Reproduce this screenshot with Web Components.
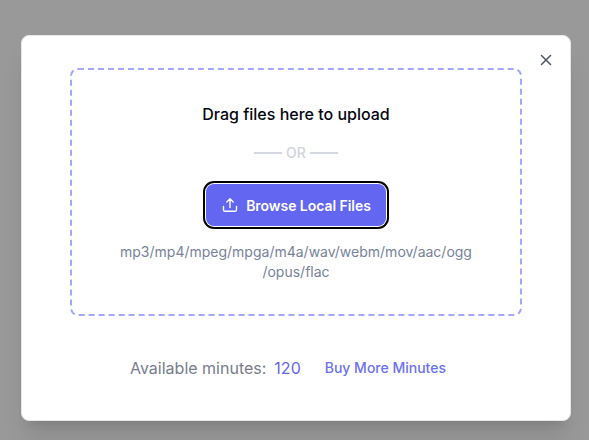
<!DOCTYPE html>
<html>
<head>
<meta charset="utf-8">
<style>
html, body { margin: 0; height: 100%; }
body { font-family: Inter, "Liberation Sans", sans-serif; overflow: hidden; }
</style>
</head>
<body>
<upload-dialog>
    <drop-zone>
        <browse-button>Browse Local Files</browse-button>
    </drop-zone>
    <minutes-footer minutes="120"></minutes-footer>
</upload-dialog>
<script>
class UploadDialog extends HTMLElement {
    connectedCallback() {
        this.attachShadow({ mode: 'open' });
        this.shadowRoot.innerHTML = `
            <style>
                :host {
                    display: flex;
                    box-sizing: border-box;
                    width: 589px;
                    height: 440px;
                    padding: 35px 18px 19px 21px;
                    background: #999;
                }
                .modal {
                    position: relative;
                    box-sizing: border-box;
                    flex: 1;
                    display: flex;
                    flex-direction: column;
                    padding: 32px 48px 0;
                    background: white;
                    border: 1px solid #e5e7eb;
                    border-radius: 8px;
                    box-shadow: 0 20px 25px -5px rgba(0, 0, 0, 0.1), 0 8px 10px -6px rgba(0, 0, 0, 0.1);
                }
                .close {
                    position: absolute;
                    top: 17px;
                    right: 17px;
                    width: 14px;
                    height: 14px;
                }
            </style>
            <div class="modal">
                <svg class="close" viewBox="0 0 14 14" fill="none" stroke="#4b5563" stroke-width="1.5" stroke-linecap="round">
                    <path d="M2.5 2.5l9 9M11.5 2.5l-9 9"/>
                </svg>
                <slot></slot>
            </div>
        `;
    }
}

class DropZone extends HTMLElement {
    connectedCallback() {
        this.attachShadow({ mode: 'open' });
        this.shadowRoot.innerHTML = `
            <style>
                :host {
                    display: flex;
                    flex-direction: column;
                    align-items: center;
                    box-sizing: border-box;
                    height: 248px;
                    padding-top: 33px;
                    border: 2px dashed #a5a6fc;
                    border-radius: 8px;
                }
                .title {
                    font-size: 16px;
                    line-height: 22px;
                    font-weight: 450;
                    color: #030712;
                }
                .or {
                    display: flex;
                    align-items: center;
                    gap: 4px;
                    margin-top: 18px;
                    font-size: 14px;
                    line-height: 20px;
                    font-weight: 500;
                    color: #d1d5db;
                }
                .or i {
                    width: 28px;
                    height: 1.5px;
                    background: #d5d8e0;
                }
                .types {
                    width: 360px;
                    margin-top: 16px;
                    font-size: 14px;
                    line-height: 20px;
                    text-align: center;
                    color: #77839a;
                    overflow-wrap: anywhere;
                }
            </style>
            <div class="title">Drag files here to upload</div>
            <div class="or"><i></i>OR<i></i></div>
            <slot></slot>
            <div class="types">mp3/mp4/mpeg/mpga/m4a/wav/webm/mov/aac/ogg<br>/opus/flac</div>
        `;
    }
}

class BrowseButton extends HTMLElement {
    connectedCallback() {
        this.attachShadow({ mode: 'open' });
        this.shadowRoot.innerHTML = `
            <style>
                :host {
                    display: flex;
                    align-items: center;
                    justify-content: center;
                    gap: 8px;
                    box-sizing: border-box;
                    width: 180px;
                    height: 42px;
                    margin-top: 21px;
                    background: #6366f1;
                    border-radius: 8px;
                    box-shadow: 0 0 0 1px white, 0 0 0 3px black;
                    font-size: 14px;
                    font-weight: 600;
                    letter-spacing: -0.05px;
                    color: white;
                }
                svg { width: 16px; height: 16px; margin-left: 1px; }
            </style>
            <svg viewBox="0 0 16 16" fill="none" stroke="white" stroke-width="1.4" stroke-linecap="round" stroke-linejoin="round">
                <path d="M1.5 9.5v3.2c0 .9.7 1.6 1.6 1.6h9.8c.9 0 1.6-.7 1.6-1.6V9.5"/>
                <path d="M8 10.5V2M4.8 5L8 1.8 11.2 5"/>
            </svg>
            <slot></slot>
        `;
    }
}

class MinutesFooter extends HTMLElement {
    connectedCallback() {
        this.attachShadow({ mode: 'open' });
        this.shadowRoot.innerHTML = `
            <style>
                :host {
                    display: flex;
                    align-items: center;
                    justify-content: center;
                    margin-top: 40px;
                    padding-right: 16px;
                    line-height: 24px;
                }
                .label { font-size: 16px; color: #777d8c; }
                .count { margin-left: 8px; font-size: 16px; color: #6366f1; }
                .buy { margin-left: 24px; font-size: 14px; font-weight: 500; color: #6d70f4; }
            </style>
            <span class="label">Available minutes:</span>
            <span class="count">${this.getAttribute('minutes')}</span>
            <span class="buy">Buy More Minutes</span>
        `;
    }
}

customElements.define('upload-dialog', UploadDialog);
customElements.define('drop-zone', DropZone);
customElements.define('browse-button', BrowseButton);
customElements.define('minutes-footer', MinutesFooter);
</script>
</body>
</html>
